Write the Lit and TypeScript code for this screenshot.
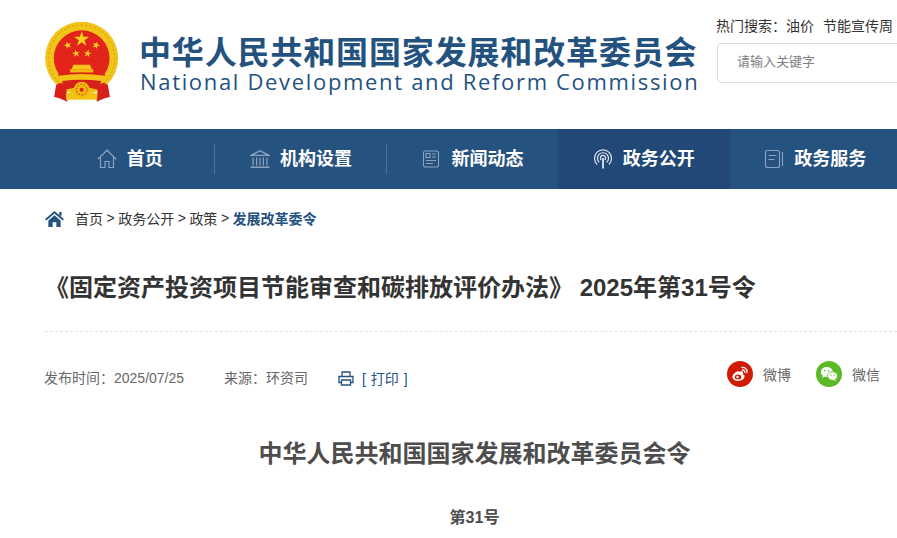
import { LitElement, html, css, svg } from "lit";
import { customElement } from "lit/decorators.js";

function star(cx: number, cy: number, r: number, rot = 0) {
  const pts: string[] = [];
  for (let i = 0; i < 10; i++) {
    const rad = i % 2 ? r * 0.382 : r;
    const a = ((-90 + rot + i * 36) * Math.PI) / 180;
    pts.push(`${(cx + rad * Math.cos(a)).toFixed(1)},${(cy + rad * Math.sin(a)).toFixed(1)}`);
  }
  return pts.join(" ");
}

const emblem = svg`<svg class="emblem" viewBox="42 36 228 244" width="76" height="81">
  <circle cx="155" cy="145" r="110" fill="#f0c419"/>
  <circle cx="155" cy="145" r="100" fill="none" stroke="#e2a90f" stroke-width="4" stroke-dasharray="7 6"/>
  <circle cx="155" cy="145" r="84" fill="#e3241b"/>
  <polygon points="${star(155, 88, 24)}" fill="#f8d21c"/>
  <polygon points="${star(113, 106, 12, -20)}" fill="#f8d21c"/>
  <polygon points="${star(198, 106, 12, 20)}" fill="#f8d21c"/>
  <polygon points="${star(138, 131, 12, -10)}" fill="#f8d21c"/>
  <polygon points="${star(173, 131, 12, 10)}" fill="#f8d21c"/>
  <path d="M125 178 L130 165 H180 L186 178Z" fill="#f5c518"/>
  <rect x="120" y="178" width="70" height="10" fill="#f0b90f"/>
  <path d="M72 262 L78 226 Q90 214 108 224 L112 276 L88 266Z" fill="#d8201a"/>
  <path d="M240 262 L234 226 Q222 214 204 224 L200 276 L224 266Z" fill="#d8201a"/>
  <path d="M84 196 Q155 186 226 196 L212 224 Q155 212 100 224Z" fill="#f3c316"/>
  <path d="M84 196 Q155 186 226 196" fill="none" stroke="#d8201a" stroke-width="4"/>
  <path d="M96 214 Q155 206 214 214 L206 240 Q155 226 104 240Z" fill="#d8201a"/>
  <rect x="108" y="250" width="94" height="20" fill="#f3c316"/>
  <circle cx="155" cy="240" r="24" fill="#efb90f"/>
  <circle cx="155" cy="240" r="16" fill="none" stroke="#d8201a" stroke-width="3" stroke-dasharray="5 5"/>
  <circle cx="155" cy="240" r="6" fill="#e3241b"/>
</svg>`;

const ic = {
  home: svg`<svg class="ni" viewBox="0 0 20 20" width="20" height="20" fill="none" stroke="#8ba3bf" stroke-width="1.2"><path d="M.8 10.2 10 1.2l9.2 9M3.500 8.500V18.500H8V12.500H12V18.500H16.500V8.500"/></svg>`,
  bank: svg`<svg class="ni" viewBox="0 0 20 20" width="20" height="20" fill="#8ba3bf"><path d="M10 1 20 6v1H0V6Zm0 1.600L4 5.800h12Z" fill-rule="evenodd"/><path d="M2.500 8.500h1.200v8H2.500ZM6 8.500h1.200v8H6ZM9.400 8.500h1.200v8H9.400ZM12.800 8.500H14v8h-1.200ZM16.300 8.500h1.200v8h-1.200ZM.5 17.500h19V19H.5Z"/></svg>`,
  news: svg`<svg class="ni" viewBox="0 0 20 20" width="20" height="20" fill="none" stroke="#8ba3bf" stroke-width="1.1"><rect x="2.500" y="2" width="15" height="16" rx="2"/><rect x="5" y="4.500" width="4" height="4"/><path d="M11 5h4M11 8h4M5 11.500h10M5 14.500h7"/></svg>`,
  signal: svg`<svg class="ni" viewBox="0 0 20 20" width="20" height="20" fill="none" stroke="#e3e9f1" stroke-width="1.2"><path d="M4.200 15.500a8.500 8.500 0 1 1 11.600 0M6.300 13.300a5.500 5.500 0 1 1 7.400 0M8.300 11a2.600 2.600 0 1 1 3.400 0"/><path d="M10 9v10.500" stroke-width="1.800"/></svg>`,
  book: svg`<svg class="ni" viewBox="0 0 20 20" width="20" height="20" fill="none" stroke="#8ba3bf" stroke-width="1.1"><rect x="1.500" y="1.500" width="14" height="17" rx="2"/><path d="M4.500 6.500h8M4.500 10.500h6M18.500 3v14"/></svg>`,
};

const navItems = [
  { t: "首页", i: ic.home },
  { t: "机构设置", i: ic.bank },
  { t: "新闻动态", i: ic.news },
  { t: "政务公开", i: ic.signal, active: true },
  { t: "政务服务", i: ic.book },
];

@customElement("app-root")
export class AppRoot extends LitElement {
  static styles = css`
    :host {
      display: block;
      width: 897px;
      height: 538px;
      overflow: hidden;
      background: #fff;
      font-family: "Liberation Sans", "Noto Sans CJK SC", sans-serif;
      color: #333;
    }
    .top {
      height: 129px;
      display: flex;
      padding-left: 44px;
      box-sizing: border-box;
    }
    .emblem { margin-top: 22px; flex: none; }
    .brand { margin-left: 19px; width: 557px; flex: none; color: #24527f; }
    .brand-cn {
      margin-top: 36px;
      font-size: 32px;
      line-height: 34px;
      font-weight: 700;
      letter-spacing: 0.85px;
      white-space: nowrap;
    }
    .brand-en {
      font-family: "Open Sans", "Liberation Sans", sans-serif;
      font-size: 22px;
      line-height: 22px;
      letter-spacing: 1.67px;
      margin-left: 1px;
      white-space: nowrap;
    }
    .tools { margin-left: 20px; flex: none; }
    .hot {
      margin-top: 17px;
      font-size: 14px;
      line-height: 18px;
      white-space: nowrap;
      color: #333;
    }
    .hot span { margin-right: 5px; }
    .search {
      margin-top: 8px;
      margin-left: 1px;
      width: 240px;
      height: 40px;
      box-sizing: border-box;
      border: 1px solid #ddd;
      border-radius: 4px;
      padding-left: 19px;
      font-size: 13px;
      line-height: 36px;
      color: #808080;
    }
    nav {
      height: 60px;
      background: #25527f;
      display: flex;
      padding-left: 44px;
      overflow: hidden;
    }
    .item {
      position: relative;
      flex: none;
      width: 171.4px;
      display: flex;
      align-items: center;
      justify-content: center;
      gap: 10px;
      color: #fff;
      font-size: 18px;
      line-height: 58px;
      padding-bottom: 1px;
      box-sizing: border-box;
      font-weight: 700;
    }
    .item.active { background: #214876; }
    .item.div::after {
      content: "";
      position: absolute;
      right: 0;
      top: 15px;
      height: 30px;
      width: 1px;
      background: #4f7299;
    }
    .crumb {
      margin: 20px 0 0 45px;
      height: 18px;
      display: flex;
      align-items: center;
      font-size: 14px;
      color: #333;
      white-space: nowrap;
    }
    .crumb svg { margin-right: 11px; margin-top: 2px; }
    .crumb b { color: #25527f; }
    .crumb i { font-style: normal; margin: 0 3.5px; }
    h1 {
      margin: 43px 0 0 45px;
      font-size: 24px;
      line-height: 36px;
      font-weight: 700;
      color: #333;
      white-space: nowrap;
    }
    .rule {
      margin: 25px 0 0 45px;
      border-top: 1px dashed #e4e4e4;
    }
    .meta {
      margin: 28px 0 0 44px;
      height: 34px;
      display: flex;
      align-items: center;
      font-size: 14px;
      color: #666;
      white-space: nowrap;
    }
    .src { margin-left: 40px; }
    .print { margin-left: 30px; display: flex; align-items: center; gap: 8px; color: #25527f; margin-top: 2px; word-spacing: 1px; }
    .share { margin-left: auto; display: flex; align-items: center; margin-right: 17px; margin-top: -6px; }
    .circle {
      width: 26px;
      height: 26px;
      border-radius: 50%;
      display: flex;
      align-items: center;
      justify-content: center;
      margin-right: 10px;
    }
    .wb { background: #cf1b05; }
    .wx { background: #5bb926; margin-left: 25px; }
    .art { margin-left: 44px; width: 861px; text-align: center; }
    h2 {
      margin: 42px 0 0;
      font-size: 24px;
      line-height: 36px;
      font-weight: 700;
      color: #4d4d4d;
    }
    .no {
      margin-top: 32px;
      font-size: 16px;
      line-height: 28px;
      font-weight: 700;
      color: #4d4d4d;
    }
  `;

  render() {
    return html`
      <div class="top">
        ${emblem}
        <div class="brand">
          <div class="brand-cn">中华人民共和国国家发展和改革委员会</div>
          <div class="brand-en">National Development and Reform Commission</div>
        </div>
        <div class="tools">
          <div class="hot"><span>热门搜索：油价</span> 节能宣传周</div>
          <div class="search">请输入关键字</div>
        </div>
      </div>
      <nav>
        ${navItems.map(
          (n, idx) => html`<div class="item ${n.active ? "active" : ""} ${idx < 2 ? "div" : ""}">${n.i}<span>${n.t}</span></div>`
        )}
      </nav>
      <div class="crumb">
        <svg viewBox="0 0 20 17" width="19" height="16" fill="#25527f"><path d="M10 0 20 8.500l-1.300 1.500L10 2.700 1.300 10 0 8.500Z"/><path d="M3.500 10 10 4.500 16.500 10v7H12v-5H8v5H3.500Z"/><rect x="15" y="1" width="2.500" height="4"/></svg>
        首页<i>&gt;</i>政务公开<i>&gt;</i>政策<i>&gt;</i><b>发展改革委令</b>
      </div>
      <h1>《固定资产投资项目节能审查和碳排放评价办法》 2025年第31号令</h1>
      <div class="rule"></div>
      <div class="meta">
        <span>发布时间：2025/07/25</span>
        <span class="src">来源：环资司</span>
        <span class="print">
          <svg viewBox="0 0 16 15" width="16" height="15" fill="none" stroke="#25527f" stroke-width="1.300"><path d="M4 5V1h8v4M3.500 11.500H1V5.500h14v6h-2.500"/><path d="M3.500 9h9v5h-9z"/></svg>
          [ 打印 ]
        </span>
        <span class="share">
          <span class="circle wb">
            <svg viewBox="0 0 20 20" width="20" height="20"><path d="M8.500 7C5 8 2 11 2.500 13.500 3 16.500 7 17.500 10.500 16.500c3-1 4.500-3 4-4.800-.3-1-1.200-1.300-1.700-1.500.5-1 .5-2-.2-2.500-1-.7-2.500-.3-3.600.2-.1-.6-.2-1-1-.9Z" fill="#fff"/><ellipse cx="8" cy="13" rx="3.300" ry="2.500" fill="#cf1b05"/><circle cx="7.500" cy="13" r="1.200" fill="#fff"/><path d="M12 3.500c3-.5 5.500 2 5 5M12.500 6c1.300-.2 2.500 1 2.300 2.300" fill="none" stroke="#fff" stroke-width="1.300" stroke-linecap="round"/></svg>
          </span>
          微博
          <span class="circle wx">
            <svg viewBox="0 0 20 20" width="20" height="20" fill="#fff"><ellipse cx="7.800" cy="8" rx="6" ry="5"/><path d="M4 11.500l-1 2.500 3-1.500Z"/><ellipse cx="13.500" cy="12" rx="5" ry="4.200" stroke="#5bb926" stroke-width=".8"/><path d="M16 15l1 2-3-1.200Z"/><circle cx="5.800" cy="6.800" r=".8" fill="#5bb926"/><circle cx="9.500" cy="6.800" r=".8" fill="#5bb926"/><circle cx="12" cy="11" r=".7" fill="#5bb926"/><circle cx="15.200" cy="11" r=".7" fill="#5bb926"/></svg>
          </span>
          微信
        </span>
      </div>
      <div class="art">
        <h2>中华人民共和国国家发展和改革委员会令</h2>
        <div class="no">第31号</div>
      </div>
    `;
  }
}
